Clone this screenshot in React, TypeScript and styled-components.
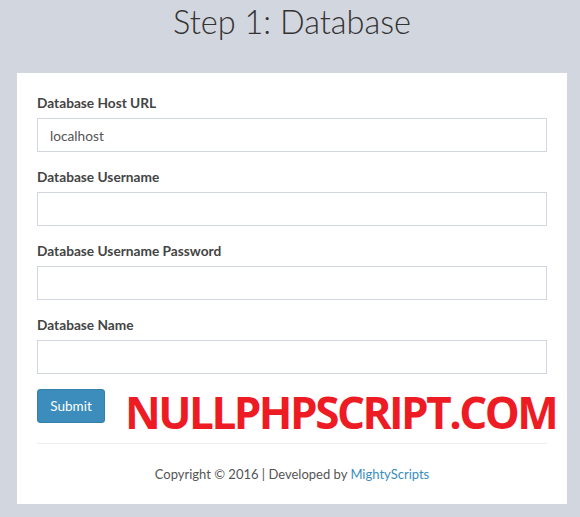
import React from "react";
import styled, { createGlobalStyle } from "styled-components";

const Global = createGlobalStyle`
  html, body { margin: 0; padding: 0; background: #d2d6de; }
  body { font-family: "Lato", "Liberation Sans", sans-serif; color: #333; font-size: 14px; }
  * { box-sizing: border-box; }
`;

const Page = styled.div`
  padding: 0 13px 0 17px;
  display: flex;
  flex-direction: column;
`;

const Title = styled.h1`
  margin: 2px 0 0;
  height: 71px;
  text-align: center;
  font-family: "Lato", sans-serif;
  font-weight: 300;
  font-size: 32.5px;
  line-height: 40px;
  color: #333;
`;

const Card = styled.div`
  background: #fff;
  padding: 20px;
`;

const Group = styled.div`
  display: flex;
  flex-direction: column;
  margin-bottom: 15px;
`;

const Label = styled.label`
  font-weight: 700;
  font-size: 13.7px;
  line-height: 20px;
  margin-bottom: 5px;
  color: #444;
`;

const Input = styled.input`
  height: 34px;
  border: 1px solid #d2d6de;
  padding: 6px 12px;
  font-family: "Lato", sans-serif;
  font-size: 13.7px;
  color: #555;
  outline: none;
  border-radius: 0;
`;

const ActionRow = styled.div`
  display: flex;
  align-items: center;
  height: 34px;
`;

const Button = styled.button`
  flex-shrink: 0;
  height: 34px;
  width: 68px;
  padding: 6px 0;
  background: #3c8dbc;
  border: 1px solid #367fa9;
  border-radius: 3px;
  color: #fff;
  font-family: "Lato", sans-serif;
  font-size: 13.5px;
`;

const Watermark = styled.span`
  flex-shrink: 0;
  margin-left: 20px;
  margin-top: 12px;
  font-family: "Open Sans", sans-serif;
  font-weight: 700;
  font-size: 44px;
  letter-spacing: -2.5px;
  line-height: 44px;
  color: #ed1c24;
  white-space: nowrap;
`;

const Rule = styled.hr`
  border: 0;
  border-top: 1px solid #eee;
  margin: 20px 0;
`;

const Footer = styled.p`
  margin: 0;
  text-align: center;
  font-size: 13px;
  line-height: 20px;
  color: #555;
`;

const Link = styled.a`
  color: #3c8dbc;
  text-decoration: none;
`;

const fields = [
  { label: "Database Host URL", value: "localhost" },
  { label: "Database Username", value: "" },
  { label: "Database Username Password", value: "" },
  { label: "Database Name", value: "" },
];

export default function App() {
  return (
    <>
      <Global />
      <Page>
        <Title>Step 1: Database</Title>
        <Card>
          {fields.map((f) => (
            <Group key={f.label}>
              <Label>{f.label}</Label>
              <Input defaultValue={f.value} />
            </Group>
          ))}
          <ActionRow>
            <Button>Submit</Button>
            <Watermark>NULLPHPSCRIPT.COM</Watermark>
          </ActionRow>
          <Rule />
          <Footer>
            Copyright © 2016 | Developed by <Link href="#">MightyScripts</Link>
          </Footer>
        </Card>
      </Page>
    </>
  );
}
